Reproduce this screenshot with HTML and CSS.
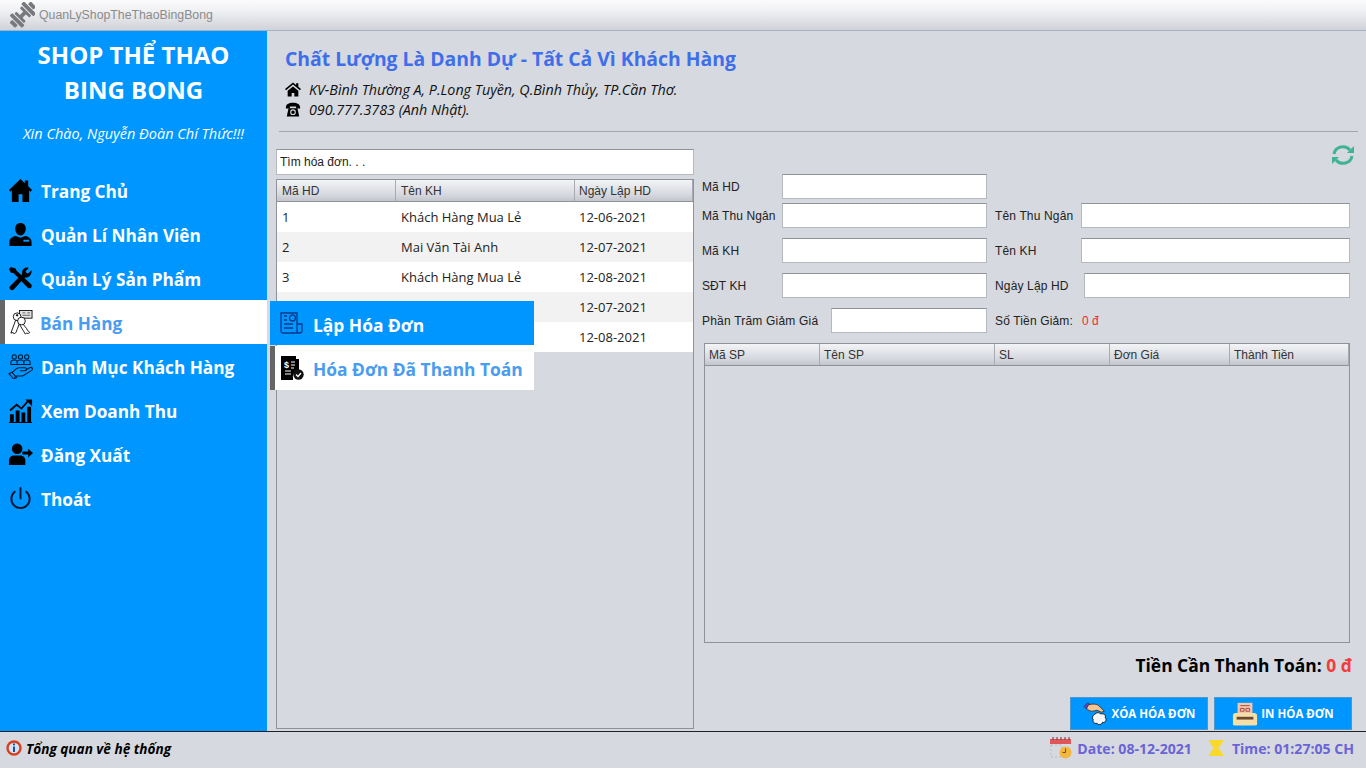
FILE: index.html
```html
<!DOCTYPE html>
<html lang="vi">
<head>
    <meta charset="UTF-8">
    <title>QuanLyShopTheThaoBingBong</title>
    <link rel="stylesheet" href="styles.css">
</head>
<body>
    <!-- Title bar -->
    <div class="titlebar">
        <svg class="app-icon" viewBox="0 0 26 26" fill="#77797d">
            <g transform="rotate(-45 13 13)">
                <rect x="-2" y="9" width="4" height="8" rx="1"/>
                <rect x="3" y="4" width="4" height="18" rx="1"/>
                <rect x="8" y="6" width="3" height="14" rx="1"/>
                <rect x="10" y="11" width="7" height="4"/>
                <rect x="16" y="6" width="3" height="14" rx="1"/>
                <rect x="20" y="4" width="4" height="18" rx="1"/>
                <rect x="25" y="9" width="4" height="8" rx="1"/>
            </g>
        </svg>
        <span>QuanLyShopTheThaoBingBong</span>
    </div>

    <div class="main">
        <!-- Left menu -->
        <div class="sidebar">
            <div class="brand">SHOP THỂ THAO<br>BING BONG</div>
            <div class="greeting">Xin Chào, Nguyễn Đoàn Chí Thức!!!</div>
            <div class="menu">
                <div class="menu-item">
                    <svg class="menu-icon" viewBox="0 0 26 26"><path d="M13 1 1 12.5l1.6 1.7L4 13v12h7v-8h4v8h7V13l1.4 1.2 1.6-1.7L21 8.700V2.500h-3.500v3z" fill="#000"/></svg>
                    <span>Trang Chủ</span>
                </div>
                <div class="menu-item">
                    <svg class="menu-icon" viewBox="0 0 26 26"><path d="M13 1c3.500 0 5.500 2.500 5.500 6s-2.500 7-5.500 7-5.500-3.500-5.500-7S9.500 1 13 1zM8 14.500l5 2 5-2c4 .8 6.500 3 6.500 6v4.500h-23V20.500c0-3 2.500-5.200 6.500-6z" fill="#000"/><rect x="16" y="18.500" width="6" height="2" fill="#0096ff"/></svg>
                    <span>Quản Lí Nhân Viên</span>
                </div>
                <div class="menu-item">
                    <svg class="menu-icon" viewBox="0 0 26 26"><path d="M3 1 1 3l2 4 3 .5L20 22c1 1.500 3 1.500 4 .5s1-3-.5-4L9 5 8 2.500z" fill="#000"/><path d="M24.500 4.500 20.500 8 18 6l3.500-4c-3-1.200-6.500.8-6.800 4l-.2 2.500-12 12c-1.500 1.500-1 3 0 4s2.500 1 3.500 0L17.500 12c3.500.8 7.500-2.500 7-7.500z" fill="#000"/></svg>
                    <span>Quản Lý Sản Phẩm</span>
                </div>
                <div class="menu-item active">
                    <svg class="menu-icon" viewBox="0 0 26 26" fill="#fff" stroke="#000" stroke-width=".9">
                        <rect x="12" y=".5" width="13" height="8" fill="#e4e4e4"/>
                        <path d="M15 3h3M20 3h3M15 5.500h8" stroke="#555"/>
                        <path d="M8 10.500 3 24l2.500-.5 1 1.500 2-2 1-3 .5-1 2.500-7z"/>
                        <circle cx="9.500" cy="7" r="4"/>
                        <path d="M15 14l-3 1 6 10 1.500-1 1.500.5 1.500-1-1.500-2-1-.5-.5-1.500z"/>
                        <circle cx="14" cy="11.500" r="4"/>
                        <circle cx="9.500" cy="5.500" r=".8" fill="#000"/>
                    </svg>
                    <span>Bán Hàng</span>
                </div>
                <div class="menu-item">
                    <svg class="menu-icon" viewBox="0 0 26 26" fill="none" stroke="#001a33" stroke-width="1.100">
                        <circle cx="6.500" cy="3" r="2.200"/><circle cx="13" cy="3" r="2.200"/><circle cx="19.500" cy="3" r="2.200"/>
                        <path d="M3 11V8.500q0-2.200 3.500-2.200 2.500 0 3 1.700.500-1.700 3.500-1.700t3.500 1.700q.5-1.700 3-1.700 3.500 0 3.500 2.200V11z"/>
                        <path d="M9.500 8v3M16.500 8v3"/>
                        <path d="M4 19.500l4.500-4q2-1.500 4-1.200h5q2 0 2 1.500t-2 1.700h-5M17.500 17.300l5-3q2-1 2.700.5t-1 2.500l-8 5q-1 .5-3 .5H9l-2.500 1.500"/>
                        <path d="M1 20.500l3-1.500 5 5.500-3 1.500z"/>
                    </svg>
                    <span>Danh Mục Khách Hàng</span>
                </div>
                <div class="menu-item">
                    <svg class="menu-icon" viewBox="0 0 26 26"><path d="M2 13 9 7l5 4 7-8" fill="none" stroke="#000" stroke-width="1.800"/><path d="M18 1.500h7v7z" fill="#000"/><path d="M1 25h24v1H1zM2 17h4v8H2zM8 13h4v12H8zM14 15h4v10h-4zM20 9h4v16h-4z" fill="#000"/></svg>
                    <span>Xem Doanh Thu</span>
                </div>
                <div class="menu-item">
                    <svg class="menu-icon" viewBox="0 0 26 26"><circle cx="9.500" cy="7" r="5.500" fill="#000"/><path d="M1 24v-5c0-3 2.500-5 5.500-5h6c3 0 5.500 2 5.500 5v5z" fill="#000"/><path d="M15 10h6V7l5 4.500-5 4.500v-3h-6z" fill="#000"/></svg>
                    <span>Đăng Xuất</span>
                </div>
                <div class="menu-item">
                    <svg class="menu-icon" viewBox="0 0 26 26" fill="none" stroke="#00142e" stroke-width="2" stroke-linecap="round"><path d="M7 6a9.500 9.500 0 1 0 12 0"/><path d="M13 2v11"/></svg>
                    <span>Thoát</span>
                </div>
            </div>
        </div>

        <!-- Content -->
        <div class="content">
            <div class="head">
                <h1>Chất Lượng Là Danh Dự - Tất Cả Vì Khách Hàng</h1>
                <div class="contact">
                    <svg class="contact-icon" viewBox="0 0 18 16"><path d="M9 0 0 7.500l1.200 1.300L9 2.500l7.800 6.300L18 7.500 15 5V1h-2.500v2zM3 9.500V16h4.500v-4h3v4H15V9.500L9 4.500z" fill="#000"/></svg>
                    <span>KV-Bình Thường A, P.Long Tuyền, Q.Bình Thủy, TP.Cần Thơ.</span>
                </div>
                <div class="contact">
                    <svg class="contact-icon" viewBox="0 0 18 16"><path d="M1 5.500C1 2.500 4 .5 9 .5s8 2 8 5v1.500h-4.500V4.500h-7V7H1z" fill="#000"/><path d="M4 6.500h10l2 9.500H2z" fill="#000"/><circle cx="9" cy="11" r="2.600" fill="none" stroke="#d6d9df" stroke-width="1.200"/></svg>
                    <span>090.777.3783 (Anh Nhật).</span>
                </div>
            </div>
            <div class="divider"></div>

            <div class="panels">
                <!-- Invoice list -->
                <div class="list-panel">
                    <input class="search" type="text" value="Tìm hóa đơn. . .">
                    <div class="grid-box list-box">
                        <div class="grid-head list-cols">
                            <div>Mã HD</div>
                            <div>Tên KH</div>
                            <div>Ngày Lập HD</div>
                        </div>
                        <div class="list-row list-cols"><div>1</div><div>Khách Hàng Mua Lẻ</div><div>12-06-2021</div></div>
                        <div class="list-row list-cols"><div>2</div><div>Mai Văn Tài Anh</div><div>12-07-2021</div></div>
                        <div class="list-row list-cols"><div>3</div><div>Khách Hàng Mua Lẻ</div><div>12-08-2021</div></div>
                        <div class="list-row list-cols"><div>4</div><div></div><div>12-07-2021</div></div>
                        <div class="list-row list-cols"><div>5</div><div></div><div>12-08-2021</div></div>
                    </div>
                </div>

                <!-- Invoice detail -->
                <div class="detail-panel">
                    <div class="refresh-row">
                        <svg class="refresh" viewBox="0 0 24 22" fill="none" stroke="#3fb394" stroke-width="3">
                            <path d="M3 10a9 8.500 0 0 1 16-4"/>
                            <path d="M21 12a9 8.500 0 0 1-16 4"/>
                            <path d="M23 2v7h-7z" fill="#3fb394" stroke="none"/>
                            <path d="M1 20v-7h7z" fill="#3fb394" stroke="none"/>
                        </svg>
                    </div>
                    <div class="form-row first">
                        <label class="lbl">Mã HD</label>
                        <input class="field" type="text">
                    </div>
                    <div class="form-row">
                        <label class="lbl">Mã Thu Ngân</label>
                        <input class="field" type="text">
                        <label class="lbl-right">Tên Thu Ngân</label>
                        <input class="field-wide" type="text">
                    </div>
                    <div class="form-row">
                        <label class="lbl">Mã KH</label>
                        <input class="field" type="text">
                        <label class="lbl-right">Tên KH</label>
                        <input class="field-wide" type="text">
                    </div>
                    <div class="form-row">
                        <label class="lbl">SĐT KH</label>
                        <input class="field" type="text">
                        <label class="lbl-right lbl-date">Ngày Lập HD</label>
                        <input class="field-wide" type="text">
                    </div>
                    <div class="form-row">
                        <label class="lbl lbl-percent">Phần Trăm Giảm Giá</label>
                        <input class="field" type="text">
                        <label class="lbl-right lbl-discount">Số Tiền Giảm:</label>
                        <span class="discount">0 đ</span>
                    </div>

                    <div class="grid-box items-box">
                        <div class="grid-head items-cols">
                            <div>Mã SP</div>
                            <div>Tên SP</div>
                            <div>SL</div>
                            <div>Đơn Giá</div>
                            <div>Thành Tiền</div>
                        </div>
                    </div>

                    <div class="total">Tiền Cần Thanh Toán: <span>0 đ</span></div>

                    <div class="actions">
                        <button class="action-btn">
                            <svg class="btn-icon" viewBox="0 0 28 26">
                                <path d="M1 5l4-4 3 2-4 5z" fill="#6a3fc0" stroke="#222" stroke-width=".6"/>
                                <path d="M6 3c4-1 9-1 11 1l6 6-3 1-5-2-5 1C8 10 5 9 4 7z" fill="#f8c48f" stroke="#222" stroke-width=".8"/>
                                <path d="M13 13c2-2 5-2 6 0 3-1 6 1 5 4 2 2 0 6-3 5-1 3-5 3-6 1-3 1-5-2-4-4-2-2 0-5 2-6z" fill="#f4f6f8" stroke="#111" stroke-width="1"/>
                            </svg>
                            <span>XÓA HÓA ĐƠN</span>
                        </button>
                        <button class="action-btn">
                            <svg class="btn-icon" viewBox="0 0 28 26">
                                <rect x="6" y="1" width="16" height="12" fill="#f3c6b0"/>
                                <path d="M9 4h10M9 7h4v3H9zM15 7h4v3h-4z" stroke="#a8443a" fill="none"/>
                                <path d="M1 15q0-3 3-3h20q3 0 3 3v9q0 1.500-3 1.500H4Q1 25.500 1 24z" fill="#f5dfa6"/>
                                <rect x="5" y="16" width="18" height="3" fill="#6b4a35"/>
                            </svg>
                            <span>IN HÓA ĐƠN</span>
                        </button>
                    </div>
                </div>
            </div>

            <!-- Submenu of Bán Hàng -->
            <div class="submenu">
                <div class="sub-item current">
                    <svg class="sub-icon" viewBox="0 0 24 24" fill="none" stroke="#003a8c" stroke-width="1.300"><path d="M4 22H3q-2 0-2-2V2h16v18q0 2 2 2H4M19 22q3 0 3-2v-7h-5"/><circle cx="12.500" cy="7" r="3"/><path d="M4 5h3M4 9h3M4 13h9M4 17h9"/></svg>
                    <span>Lập Hóa Đơn</span>
                </div>
                <div class="sub-item">
                    <svg class="sub-icon" viewBox="0 0 24 24">
                        <path d="M1 0h15v3h3v12h-2V5H3v17h10v2H1z" fill="#000"/>
                        <path d="M3 3h14v12a6 6 0 0 0-4 7H3z" fill="#000"/>
                        <text class="dollar" x="4" y="12">$</text>
                        <path d="M11 6h4M11 9h4M11 12h3M5 15h6M5 18h6" stroke="#fff"/>
                        <circle cx="18.500" cy="18.500" r="5.200" fill="#111"/>
                        <path d="M16 18.500l2 2 3-3.500" fill="none" stroke="#fff" stroke-width="1.300"/>
                    </svg>
                    <span>Hóa Đơn Đã Thanh Toán</span>
                </div>
            </div>
        </div>
    </div>

    <!-- Status bar -->
    <div class="statusbar">
        <div class="status-left">
            <svg class="status-icon" viewBox="0 0 16 16"><circle cx="8" cy="8" r="6.500" fill="#cfe4f7" stroke="#d9401f" stroke-width="2.400"/><path d="M8 3.500v1.800M8 6.500v5.500" stroke="#1d4f9c" stroke-width="2"/></svg>
            <span>Tổng quan về hệ thống</span>
        </div>
        <div class="status-right">
            <svg class="status-icon cal" viewBox="0 0 22 22"><path d="M0 2h21v5H0z" fill="#e0555a"/><path d="M3 0v3M7 0v3M11 0v3M15 0v3M19 0v3" stroke="#7a2c30"/><path d="M1 8h11v12H1z" fill="none" stroke="#bbb" stroke-dasharray="2 2"/><circle cx="15.500" cy="15.500" r="6" fill="#f3b63f"/><path d="M15.500 11.500v4h-3" stroke="#7a4b10" fill="none"/></svg>
            <span class="stamp date">Date: 08-12-2021</span>
            <svg class="status-icon glass" viewBox="0 0 14 16"><path d="M0 0h14v2.500h-1.500Q12 6 8.500 8 12 10 12.500 13.500H14V16H0v-2.500h1.500Q2 10 5.500 8 2 6 1.500 2.500H0z" fill="#fbd92b"/></svg>
            <span class="stamp">Time: 01:27:05 CH</span>
        </div>
    </div>
</body>
</html>
```

FILE: styles.css
```css
/* page */
html, body {
    margin: 0;
    height: 100%;
}
body {
    width: 1366px;
    height: 768px;
    overflow: hidden;
    display: flex;
    flex-direction: column;
    background-color: #d6d9df;
    font-family: "Liberation Sans", Arial, sans-serif;
    font-size: 12px;
    color: #222;
}

/* title bar */
.titlebar {
    height: 31px;
    flex: none;
    display: flex;
    align-items: center;
    box-sizing: border-box;
    padding-left: 10px;
    background: linear-gradient(#fbfbfc, #f0f1f3 35%, #cfd2d9);
    border-bottom: 1px solid #a9b2bf;
    font-size: 12.300px;
    color: #8b8b8b;
}
.app-icon {
    width: 25px;
    height: 26px;
    margin-right: 4px;
}

.main {
    height: 700px;
    flex: none;
    display: flex;
    position: relative;
}

/* left menu */
.sidebar {
    width: 267px;
    flex: none;
    background-color: #0096ff;
    color: #fff;
}
.brand {
    margin-top: 6px;
    text-align: center;
    font-family: "Open Sans", sans-serif;
    font-size: 24px;
    font-weight: 700;
    line-height: 35px;
}
.greeting {
    margin-top: 17px;
    text-align: center;
    font-family: "Open Sans", sans-serif;
    font-size: 14.500px;
    font-style: italic;
    line-height: 20px;
}
.menu {
    margin-top: 24px;
}
.menu-item {
    height: 44px;
    display: flex;
    align-items: center;
    padding-left: 8px;
    font-family: "Open Sans", sans-serif;
    font-size: 17.200px;
    font-weight: 700;
}
.menu-item svg {
    margin-top: 1px;
}
.menu-item span {
    margin-left: 8px;
    padding-top: 2px;
}
.menu-item.active {
    background-color: #fff;
    border-left: 5px solid #666;
    padding-left: 3px;
    color: #4a9cf0;
}
.menu-item.active span {
    margin-left: 7px;
}
.menu-icon {
    width: 25px;
    height: 25px;
    flex: none;
}

/* content */
.content {
    flex: 1;
    min-width: 0;
}
.head {
    height: 100px;
    box-sizing: border-box;
    padding: 14px 0 0 18px;
}
h1 {
    margin: 0 0 7px;
    font-family: "Open Sans", sans-serif;
    font-size: 19.350px;
    font-weight: 700;
    line-height: 27px;
    color: #3f6eea;
}
.contact {
    height: 20px;
    display: flex;
    align-items: center;
    font-family: "Open Sans", sans-serif;
    font-size: 14.300px;
    font-style: italic;
    color: #111;
}
.contact-icon {
    width: 16px;
    height: 15px;
    margin-right: 8px;
}
.divider {
    height: 1px;
    margin: 0 8px 0 12px;
    background-color: #a3a6ab;
}
.panels {
    display: flex;
    padding-left: 9px;
}

/* invoice list */
.list-panel {
    width: 418px;
    margin-top: 17px;
    margin-right: 8px;
    flex: none;
}
.search {
    display: block;
    width: 100%;
    height: 26px;
    box-sizing: border-box;
    padding: 0 3px;
    border: 1px solid #b4b8bf;
    border-top-color: #8f9298;
    font-family: "Liberation Sans", Arial, sans-serif;
    font-size: 12px;
    color: #222;
    outline: none;
}
.grid-box {
    box-sizing: border-box;
    border: 1px solid #8f9298;
}
.list-box {
    height: 550px;
    margin-top: 4px;
}
.grid-head {
    height: 22px;
    background: linear-gradient(#f3f4f6, #d5d8de 70%, #c2c5cc);
    border-bottom: 1px solid #8f9298;
    box-sizing: border-box;
}
.grid-head div {
    padding-top: 1px;
    line-height: 20px;
    padding-left: 5px;
    border-right: 1px solid #a7aab0;
    color: #333;
}
.list-cols {
    display: grid;
    grid-template-columns: 119px 179px 1fr;
}
.list-cols div:nth-child(3) {
    padding-left: 4px;
}
.list-row {
    height: 30px;
    background-color: #fff;
    font-family: "Open Sans", sans-serif;
    font-size: 13px;
    line-height: 31px;
    color: #222;
}
.list-row:nth-child(odd) {
    background-color: #f2f2f2;
}
.list-row div {
    padding-left: 5px;
}

/* invoice detail */
.detail-panel {
    flex: 1;
    margin-top: 12px;
}
.refresh-row {
    height: 30px;
    display: flex;
    justify-content: flex-end;
    padding-right: 11px;
}
.refresh {
    width: 24px;
    height: 22px;
}
.form-row {
    height: 25px;
    display: flex;
    align-items: center;
    margin-top: 10px;
}
.form-row.first {
    margin-top: 0;
    margin-bottom: -6px;
}
.lbl {
    width: 80px;
    flex: none;
    letter-spacing: .1px;
}
.lbl-percent {
    width: 129px;
    letter-spacing: .2px;
}
.field {
    width: 205px;
    height: 25px;
    box-sizing: border-box;
    border: 1px solid #b4b8bf;
    border-top-color: #8f9298;
    flex: none;
}
.lbl-percent + .field {
    width: 156px;
}
.lbl-right {
    width: 86px;
    margin-left: 8px;
    flex: none;
    letter-spacing: .15px;
}
.lbl-date {
    width: 89px;
}
.lbl-discount {
    width: auto;
}
.field-wide {
    flex: 1;
    min-width: 0;
    height: 25px;
    margin-right: 16px;
    box-sizing: border-box;
    border: 1px solid #b4b8bf;
    border-top-color: #8f9298;
}
.discount {
    margin-left: 9px;
    color: #f52a2a;
}
.items-box {
    width: 646px;
    height: 300px;
    margin: 10px 0 0 2px;
}
.items-cols {
    display: grid;
    grid-template-columns: 115px 175px 115px 120px 1fr;
}
.items-cols div {
    padding-left: 4px;
}
.total {
    margin-top: 10px;
    padding-right: 14px;
    text-align: right;
    font-family: "Open Sans", sans-serif;
    font-size: 17.400px;
    font-weight: 700;
    line-height: 24px;
    color: #000;
}
.total span {
    color: #f23c3c;
}
.actions {
    display: flex;
    justify-content: flex-end;
    gap: 6px;
    margin-top: 20px;
    padding-right: 14px;
}
.action-btn {
    width: 138px;
    height: 33px;
    display: flex;
    align-items: center;
    justify-content: center;
    padding: 0;
    border: 1px solid #4f97cc;
    background-color: #0096ff;
    font-family: "Open Sans", sans-serif;
    font-size: 11.500px;
    font-weight: 700;
    color: #fff;
}
.btn-icon {
    width: 26px;
    height: 26px;
    margin-right: 3px;
}

/* submenu over the list */
.submenu {
    position: absolute;
    left: 270px;
    top: 270px;
    width: 264px;
}
.sub-item {
    height: 44px;
    display: flex;
    align-items: center;
    box-sizing: border-box;
    padding-left: 5px;
    border-left: 5px solid #666;
    background-color: #fff;
    font-family: "Open Sans", sans-serif;
    font-size: 17.400px;
    font-weight: 700;
    color: #4a9cf0;
}
.sub-item span {
    padding-top: 3px;
}
.sub-item + .sub-item {
    margin-top: 1px;
}
.sub-item + .sub-item span {
    padding-top: 1px;
}
.sub-item.current {
    background-color: #0096ff;
    border-left-color: #0096ff;
    color: #fff;
}
.sub-icon {
    width: 24px;
    height: 24px;
    margin-right: 9px;
    flex: none;
}
.dollar {
    font-family: "Liberation Sans", Arial, sans-serif;
    font-size: 9px;
    font-weight: 700;
    fill: #fff;
}

/* status bar */
.statusbar {
    flex: 1;
    display: flex;
    justify-content: space-between;
    align-items: center;
    border-top: 1px solid #222;
    padding: 0 12px 4px 6px;
    font-family: "Open Sans", sans-serif;
    font-size: 13.600px;
    font-weight: 700;
}
.status-left,
.status-right {
    display: flex;
    align-items: center;
}
.status-left span {
    margin-left: 4px;
    font-style: italic;
    color: #000;
}
.status-icon {
    width: 16px;
    height: 16px;
}
.status-icon.cal {
    width: 22px;
    height: 22px;
    margin-right: 5px;
}
.status-icon.glass {
    width: 14px;
    height: 16px;
    margin: 0 9px 0 17px;
}
.stamp {
    font-size: 14.100px;
    color: #6a64d8;
}
```
